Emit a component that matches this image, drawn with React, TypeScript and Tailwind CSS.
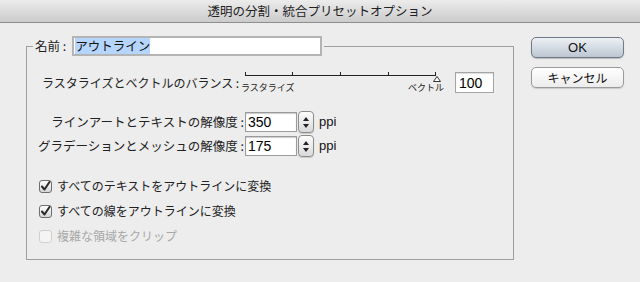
import React from "react";

const JP = "font-['Lucida_Grande','Noto_Sans_CJK_JP',sans-serif]";

function Stepper() {
  return (
    <div className="ml-[1px] flex h-[22px] w-[16px] flex-col items-center justify-center gap-[3px] rounded-[4px] border border-[#8c8c8c] bg-gradient-to-b from-[#fdfdfd] to-[#d9d9d9] shadow-[0_1px_1px_rgba(0,0,0,0.15)]">
      <svg width="6" height="4" viewBox="0 0 6 4">
        <path d="M3 0 L6 4 L0 4 Z" fill="#222" />
      </svg>
      <svg width="6" height="4" viewBox="0 0 6 4">
        <path d="M0 0 L6 0 L3 4 Z" fill="#222" />
      </svg>
    </div>
  );
}

function ResolutionRow({ label, value, mt }: { label: string; value: string; mt: string }) {
  return (
    <div className={`flex h-[22px] items-center ${mt}`}>
      <div className="w-[217px] whitespace-nowrap text-right text-[12.5px] text-[#222]">{label}</div>
      <div className="ml-[1px] flex h-[20px] w-[52px] items-center border border-[#9a9a9a] bg-white pl-[2px] font-['Liberation_Sans',sans-serif] text-[14px] leading-none text-black shadow-[inset_0_1px_1px_rgba(0,0,0,0.2)]">
        {value}
      </div>
      <Stepper />
      <span className="ml-[5px] font-['Liberation_Sans',sans-serif] text-[13px] text-[#111]">ppi</span>
    </div>
  );
}

function Check({ label, checked, disabled, mt }: { label: string; checked?: boolean; disabled?: boolean; mt: string }) {
  return (
    <div className={`flex h-[18px] items-center pl-[12px] ${mt}`}>
      <div
        className={`flex h-[13px] w-[13px] items-center justify-center rounded-[3px] border ${
          disabled
            ? "border-[#cfcfcf] bg-[#f4f4f4]"
            : "border-[#6e6e6e] bg-gradient-to-b from-[#ffffff] to-[#d6d6d6]"
        }`}
      >
        {checked && (
          <svg width="11" height="11" viewBox="0 0 11 11">
            <path d="M2 5.5 L4.5 8.5 L9.5 1" stroke="#2a2a2a" strokeWidth="2" fill="none" strokeLinecap="round" strokeLinejoin="round" />
          </svg>
        )}
      </div>
      <span className={`ml-[5px] text-[12px] ${disabled ? "text-[#a8a8a8]" : "text-[#222]"}`}>{label}</span>
    </div>
  );
}

function BalanceSlider() {
  return (
    <div className="flex w-[206px] flex-col">
      <svg width="206" height="10" viewBox="0 0 206 10">
        <g stroke="#222" strokeWidth="1">
          <line x1="4" y1="3.5" x2="195" y2="3.5" />
          <line x1="4.5" y1="0" x2="4.5" y2="4" />
          <line x1="51.5" y1="0" x2="51.5" y2="4" />
          <line x1="99.5" y1="0" x2="99.5" y2="4" />
          <line x1="147.5" y1="0" x2="147.5" y2="4" />
          <line x1="194.5" y1="0" x2="194.5" y2="4" />
        </g>
        <path d="M196 4.5 L199.5 9.5 L192.5 9.5 Z" fill="#fff" stroke="#333" strokeWidth="1" />
      </svg>
      <div className="flex justify-between pr-[3px] text-[9px] leading-[12px] text-[#222]">
        <span>ラスタライズ</span>
        <span>ベクトル</span>
      </div>
    </div>
  );
}

export default function App() {
  return (
    <div className={`h-[282px] w-[640px] overflow-hidden bg-[#ededed] ${JP}`}>
      <div className="flex h-[23px] items-center justify-center border-b border-[#8e8e8e] bg-gradient-to-b from-[#ececec] to-[#cbcbcb] text-[12.5px] text-[#222]">
        透明の分割・統合プリセットオプション
      </div>

      <div className="flex items-start pt-[13px]">
        <fieldset className="ml-[26px] w-[488px] border border-[#9f9f9f] pb-[14px]">
          <legend className="ml-[6px] flex h-[20px] items-center px-[2px]">
            <span className="text-[12.5px] text-[#222]">名前 :</span>
            <div className="ml-[6px] flex h-[20px] w-[250px] items-center border-2 border-[#b4b4b4] bg-white pl-[1px]">
              <span className="bg-[#b5d5fd] text-[12.5px] leading-[16px] text-[#111]">アウトライン</span>
            </div>
          </legend>

          <div className="mt-[16px] flex h-[21px] items-start">
            <div className="w-[214px] whitespace-nowrap pl-[15px] text-[12px] leading-[21px] text-[#222]">
              ラスタライズとベクトルのバランス :
            </div>
            <BalanceSlider />
            <div className="ml-[8px] flex h-[21px] w-[39px] items-center border border-[#a5a5a5] bg-white pl-[3px] font-['Liberation_Sans',sans-serif] text-[14px] leading-none text-black shadow-[inset_0_1px_1px_rgba(0,0,0,0.15)]">
              100
            </div>
          </div>

          <ResolutionRow label="ラインアートとテキストの解像度 :" value="350" mt="mt-[18px]" />
          <ResolutionRow label="グラデーションとメッシュの解像度 :" value="175" mt="mt-[2px]" />

          <Check label="すべてのテキストをアウトラインに変換" checked mt="mt-[20px]" />
          <Check label="すべての線をアウトラインに変換" checked mt="mt-[7px]" />
          <Check label="複雑な領域をクリップ" disabled mt="mt-[7px]" />
        </fieldset>

        <div className="ml-[17px] flex flex-col gap-[9px] pt-[1px]">
          <button className="flex h-[21px] w-[93px] items-center justify-center rounded-[5px] border border-[#6f7a88] bg-gradient-to-b from-[#eef1f5] to-[#bcc6d2] font-['Liberation_Sans',sans-serif] text-[13px] text-[#111] shadow-[0_1px_1px_rgba(0,0,0,0.2)]">
            OK
          </button>
          <button className="flex h-[21px] w-[93px] items-center justify-center rounded-[5px] border border-[#9a9a9a] bg-gradient-to-b from-[#ffffff] to-[#ececec] text-[12px] text-[#111] shadow-[0_1px_1px_rgba(0,0,0,0.15)]">
            キャンセル
          </button>
        </div>
      </div>
    </div>
  );
}
